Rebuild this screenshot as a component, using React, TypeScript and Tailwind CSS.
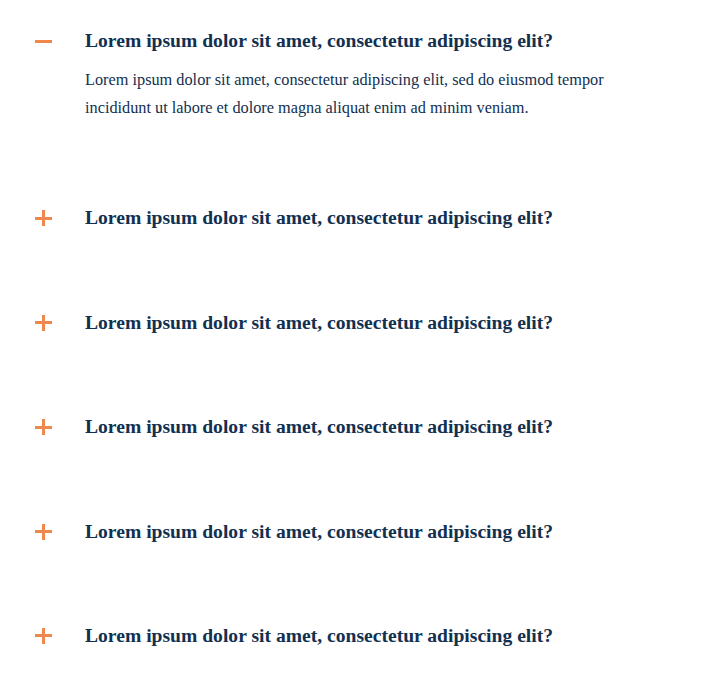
import { useState } from 'react';

const faqs = [
  {
    q: 'Lorem ipsum dolor sit amet, consectetur adipiscing elit?',
    a: 'Lorem ipsum dolor sit amet, consectetur adipiscing elit, sed do eiusmod tempor incididunt ut labore et dolore magna aliquat enim ad minim veniam.',
  },
  { q: 'Lorem ipsum dolor sit amet, consectetur adipiscing elit?', a: 'Lorem ipsum dolor sit amet, consectetur adipiscing elit.' },
  { q: 'Lorem ipsum dolor sit amet, consectetur adipiscing elit?', a: 'Lorem ipsum dolor sit amet, consectetur adipiscing elit.' },
  { q: 'Lorem ipsum dolor sit amet, consectetur adipiscing elit?', a: 'Lorem ipsum dolor sit amet, consectetur adipiscing elit.' },
  { q: 'Lorem ipsum dolor sit amet, consectetur adipiscing elit?', a: 'Lorem ipsum dolor sit amet, consectetur adipiscing elit.' },
  { q: 'Lorem ipsum dolor sit amet, consectetur adipiscing elit?', a: 'Lorem ipsum dolor sit amet, consectetur adipiscing elit.' },
];

export default function App() {
  const [open, setOpen] = useState(0);

  return (
    <div className="min-h-screen bg-white pl-[35px] pr-6 pt-[29px] font-['Liberation_Serif',serif] text-[#12304f]">
      <div className="flex flex-col gap-[80.4px]">
        {faqs.map((item, i) => (
          <div key={i}>
            <button
              onClick={() => setOpen(open === i ? -1 : i)}
              className="flex h-6 w-full items-center text-left"
            >
              <span className="relative flex h-[16px] w-[17px] shrink-0 items-center justify-center">
                <span className="absolute h-[3px] w-[17px] bg-[#f0884e]" />
                {open !== i && <span className="absolute h-[16px] w-[3px] bg-[#f0884e]" />}
              </span>
              <span className="ml-[33px] text-[19.6px] font-bold leading-6">{item.q}</span>
            </button>
            {open === i && (
              <p className="ml-[50px] mt-[13px] mb-[4px] max-w-[540px] text-[16.3px] leading-[28px]">{item.a}</p>
            )}
          </div>
        ))}
      </div>
    </div>
  );
}
